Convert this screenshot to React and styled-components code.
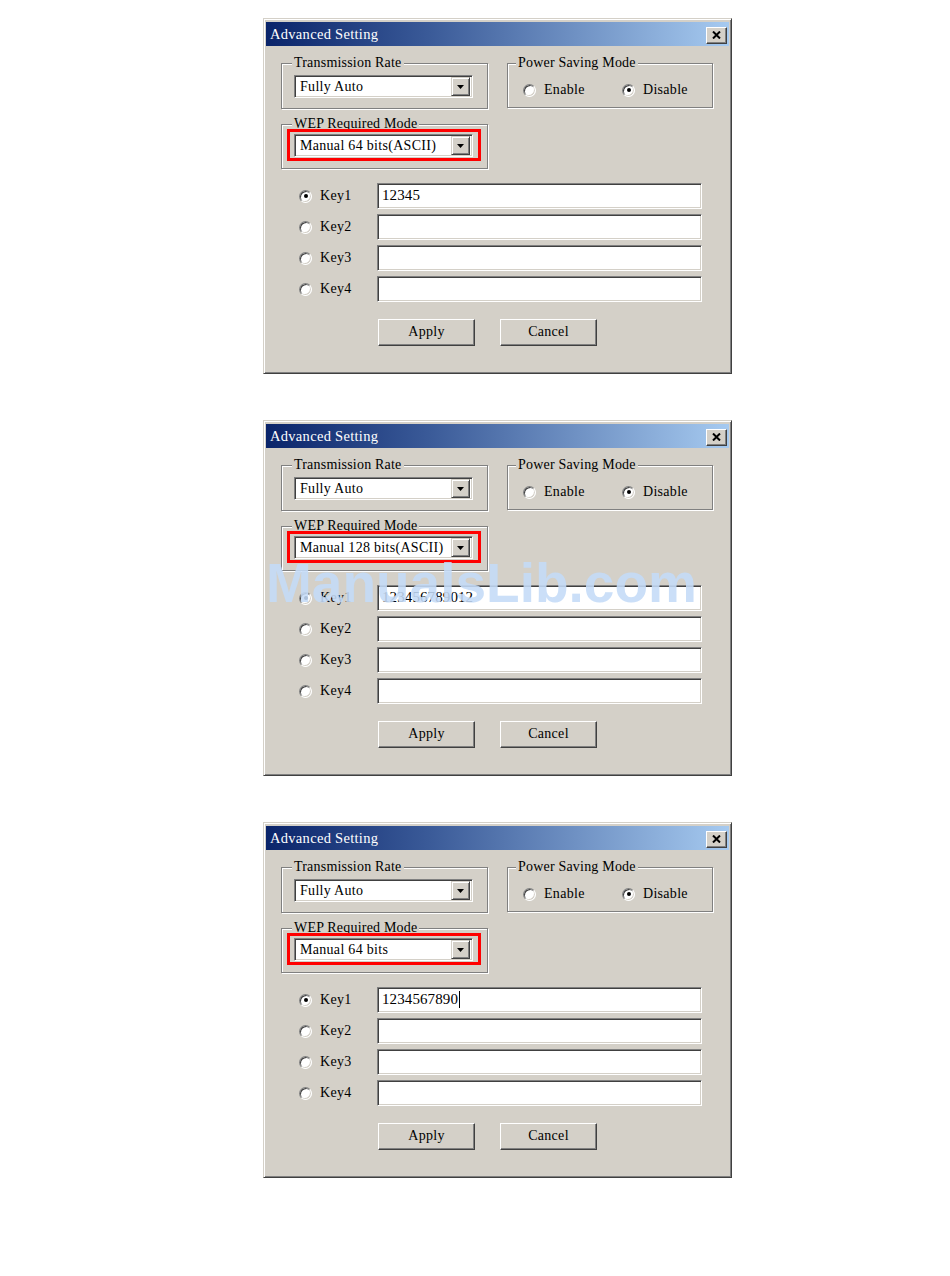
import React from 'react';
import styled, { createGlobalStyle } from 'styled-components';

const GlobalStyle = createGlobalStyle`
  html, body { margin: 0; padding: 0; background: #fff; }
  body {
    font-family: "Liberation Serif", "Times New Roman", serif;
    color: #000;
  }
  * { box-sizing: border-box; }
`;

const Page = styled.div`
  display: flex;
  flex-direction: column;
  gap: 46px;
  padding: 18px 0 0 263px;
  min-height: 1276px;
`;

const Dialog = styled.div`
  position: relative;
  width: 469px;
  height: 356px;
  background: #d4d0c8;
  border: 1px solid;
  border-color: #d4d0c8 #404040 #404040 #d4d0c8;
  box-shadow: inset 1px 1px 0 #fff, inset -1px -1px 0 #808080;
  padding: 3px 2px 2px 2px;
  display: flex;
  flex-direction: column;
`;

const TitleBar = styled.div`
  height: 24px;
  display: flex;
  align-items: center;
  justify-content: space-between;
  padding: 0 2px 0 4px;
  background: linear-gradient(to right, #0a246a 0%, #3a5a98 35%, #a6caf0 100%);
  color: #fff;
  font-size: 14.5px;
  letter-spacing: 0.3px;
`;

const CloseButton = styled.span`
  width: 21px;
  height: 17px;
  margin-top: 2px;
  background: #d4d0c8;
  border: 1px solid;
  border-color: #fff #404040 #404040 #fff;
  box-shadow: inset -1px -1px 0 #808080;
  display: flex;
  align-items: center;
  justify-content: center;
`;

const Body = styled.div`
  padding: 17px 0 0 15px;
  display: flex;
  flex-direction: column;
`;

const TopGrid = styled.div`
  display: grid;
  grid-template-columns: 207px 206px;
  column-gap: 19px;
  row-gap: 15px;
  align-items: start;
`;

const Group = styled.div`
  position: relative;
  height: ${p => p.$h}px;
  border: 1px solid #808080;
  box-shadow: inset 1px 1px 0 #fff, 1px 1px 0 #fff;
  padding: ${p => p.$pt}px 0 0 12px;
`;

const Caption = styled.span`
  position: absolute;
  top: -9px;
  left: ${p => p.$left}px;
  padding: 0 2px;
  background: #d4d0c8;
  font-size: 14px;
  line-height: 16px;
  letter-spacing: 0.2px;
  white-space: nowrap;
`;

const Combo = styled.div`
  position: relative;
  width: 179px;
  height: 23px;
  display: flex;
  align-items: center;
  background: #fff;
  border: 1px solid;
  border-color: #808080 #fff #fff #808080;
  box-shadow: inset 1px 1px 0 #404040, inset -1px -1px 0 #d4d0c8;
  padding: 1px 2px 1px 1px;

  ${p => p.$highlight && `
    &::after {
      content: '';
      position: absolute;
      left: -8px;
      right: -9px;
      top: -6px;
      bottom: -5px;
      border: 3px solid #ff0000;
      pointer-events: none;
    }
  `}
`;

const ComboText = styled.span`
  flex: 1;
  padding-left: 4px;
  font-size: 14px;
  letter-spacing: 0.3px;
  white-space: nowrap;
  line-height: 19px;
`;

const DropButton = styled.span`
  width: 19px;
  height: 19px;
  background: #d4d0c8;
  border: 1px solid;
  border-color: #d4d0c8 #404040 #404040 #d4d0c8;
  box-shadow: inset 1px 1px 0 #fff, inset -1px -1px 0 #808080;
  display: flex;
  align-items: center;
  justify-content: center;
`;

const RadioRow = styled.div`
  display: flex;
  padding: 18px 0 0 3px;
`;

const RadioOption = styled.label`
  width: ${p => p.$w}px;
  display: flex;
  align-items: center;
  gap: 8px;
  font-size: 14px;
  letter-spacing: 0.3px;
  line-height: 16px;
`;

const RadioCircle = styled.span`
  flex: none;
  width: 13px;
  height: 13px;
  border-radius: 50%;
  background: #fff;
  border: 1px solid;
  border-color: #808080 #fff #fff #808080;
  box-shadow: inset 1px 1px 0 #404040, inset -1px -1px 0 #d4d0c8;
  display: flex;
  align-items: center;
  justify-content: center;

  &::after {
    content: '';
    width: 4px;
    height: 4px;
    border-radius: 50%;
    background: #000;
    display: ${p => (p.$checked ? 'block' : 'none')};
  }
`;

const KeyList = styled.div`
  margin-top: 14px;
  display: grid;
  grid-template-columns: 96px 325px;
  grid-auto-rows: 26px;
  row-gap: 5px;
  align-items: center;
`;

const KeyLabel = styled(RadioOption)`
  padding-left: 18px;
`;

const TextField = styled.div`
  height: 26px;
  display: flex;
  align-items: center;
  background: #fff;
  border: 1px solid;
  border-color: #808080 #fff #fff #808080;
  box-shadow: inset 1px 1px 0 #404040, inset -1px -1px 0 #d4d0c8;
  padding: 0 0 2px 4px;
  font-size: 15px;
  letter-spacing: 0.1px;
  white-space: nowrap;
`;

const Caret = styled.span`
  display: inline-block;
  width: 1px;
  height: 17px;
  margin-left: 1px;
  background: #000;
`;

const ButtonRow = styled.div`
  margin-top: 17px;
  padding-left: 97px;
  display: flex;
  gap: 25px;
`;

const Button = styled.span`
  width: 97px;
  height: 27px;
  display: flex;
  align-items: center;
  justify-content: center;
  background: #d4d0c8;
  border: 1px solid;
  border-color: #fff #404040 #404040 #fff;
  box-shadow: inset -1px -1px 0 #808080;
  font-size: 14px;
  letter-spacing: 0.3px;
  padding-bottom: 2px;
`;

const Watermark = styled.div`
  position: absolute;
  left: 2px;
  top: 135px;
  font-family: "Liberation Sans", Arial, sans-serif;
  font-weight: bold;
  font-size: 55px;
  line-height: 1;
  color: rgba(196, 219, 247, 0.88);
  white-space: nowrap;
  pointer-events: none;
`;

const CloseIcon = () => (
  <svg width="9" height="8" viewBox="0 0 9 8">
    <path d="M1 0.5 L8 7.5 M8 0.5 L1 7.5" stroke="#000" strokeWidth="2" fill="none" />
  </svg>
);

const Arrow = () => (
  <svg width="7" height="4" viewBox="0 0 7 4">
    <polygon points="0,0 7,0 3.5,4" fill="#000" />
  </svg>
);

const ComboBox = ({ value, highlight }) => (
  <Combo $highlight={highlight}>
    <ComboText>{value}</ComboText>
    <DropButton><Arrow /></DropButton>
  </Combo>
);

const dialogs = [
  { mode: 'Manual 64 bits(ASCII)', key1: '12345', caret: false, watermark: false },
  { mode: 'Manual 128 bits(ASCII)', key1: '123456789012', caret: false, watermark: true },
  { mode: 'Manual 64 bits', key1: '1234567890', caret: true, watermark: false },
];

const AdvancedSetting = ({ mode, key1, caret, watermark }) => (
  <Dialog>
    <TitleBar>
      <span>Advanced Setting</span>
      <CloseButton><CloseIcon /></CloseButton>
    </TitleBar>
    <Body>
      <TopGrid>
        <Group $h={46} $pt={11}>
          <Caption $left={10}>Transmission Rate</Caption>
          <ComboBox value="Fully Auto" />
        </Group>
        <Group $h={45} $pt={0}>
          <Caption $left={8}>Power Saving Mode</Caption>
          <RadioRow>
            <RadioOption $w={99}><RadioCircle />Enable</RadioOption>
            <RadioOption $w={90}><RadioCircle $checked />Disable</RadioOption>
          </RadioRow>
        </Group>
        <Group $h={45} $pt={9}>
          <Caption $left={10}>WEP Required Mode</Caption>
          <ComboBox value={mode} highlight />
        </Group>
      </TopGrid>
      <KeyList>
        {[1, 2, 3, 4].map(n => (
          <React.Fragment key={n}>
            <KeyLabel><RadioCircle $checked={n === 1} />Key{n}</KeyLabel>
            <TextField>
              {n === 1 ? key1 : ''}
              {n === 1 && caret && <Caret />}
            </TextField>
          </React.Fragment>
        ))}
      </KeyList>
      <ButtonRow>
        <Button>Apply</Button>
        <Button>Cancel</Button>
      </ButtonRow>
    </Body>
    {watermark && <Watermark>ManualsLib.com</Watermark>}
  </Dialog>
);

export default function App() {
  return (
    <>
      <GlobalStyle />
      <Page>
        {dialogs.map((d, i) => (
          <AdvancedSetting key={i} {...d} />
        ))}
      </Page>
    </>
  );
}
